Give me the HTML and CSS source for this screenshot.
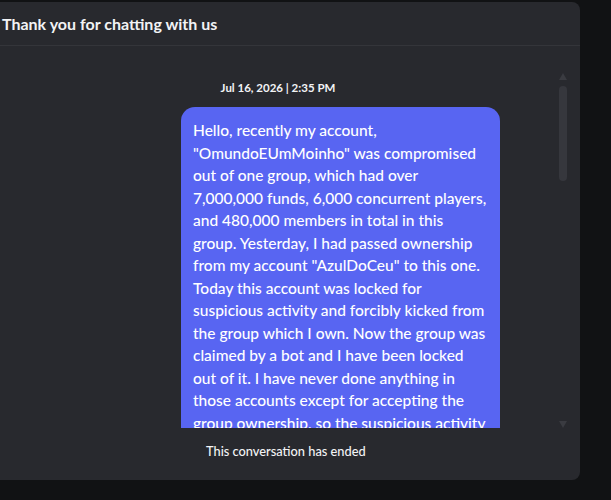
FILE: index.html
```html
<!DOCTYPE html>
<html lang="en">
<head>
<meta charset="utf-8">
<title>Chat ended</title>
<link rel="stylesheet" href="styles.css">
</head>
<body>
<div class="panel">
  <header class="panel-header">
    <h1 class="title">Thank you for chatting with us</h1>
  </header>
  <div class="chat">
    <div class="messages">
      <div class="timestamp">Jul 16, 2026 | 2:35 PM</div>
      <div class="bubble">Hello, recently my account,<br>"OmundoEUmMoinho" was compromised<br>out of one group, which had over<br>7,000,000 funds, 6,000 concurrent players,<br>and 480,000 members in total in this<br>group. Yesterday, I had passed ownership<br>from my account "AzulDoCeu" to this one.<br>Today this account was locked for<br>suspicious activity and forcibly kicked from<br>the group which I own. Now the group was<br>claimed by a bot and I have been locked<br>out of it. I have never done anything in<br>those accounts except for accepting the<br>group ownership, so the suspicious activity</div>
    </div>
    <div class="scrollbar">
      <span class="arrow arrow-up"></span>
      <div class="track"><div class="thumb"></div></div>
      <span class="arrow arrow-down"></span>
    </div>
  </div>
  <footer class="panel-footer">This conversation has ended</footer>
</div>
</body>
</html>
```
FILE: styles.css
```css
html, body {
  margin: 0;
  padding: 0;
  background: #111214;
  height: 100%;
  overflow: hidden;
}
body {
  font-family: Lato, "Liberation Sans", sans-serif;
  color: #f2f3f5;
}
.panel {
  margin-top: 2px;
  margin-left: -20px;
  width: 600px;
  height: 478px;
  background: #28292e;
  border-radius: 8px;
  display: flex;
  flex-direction: column;
  overflow: hidden;
}
.panel-header {
  height: 43px;
  border-bottom: 1px solid #34353a;
  display: flex;
  align-items: center;
  padding-left: 22px;
  flex: none;
}
.title {
  margin: 0;
  font-size: 16px;
  font-weight: 700;
  color: #f2f3f5;
}
.chat {
  height: 382px;
  display: flex;
  flex: none;
}
.messages {
  margin-left: 20px;
  width: 556px;
  overflow: hidden;
  display: flex;
  flex-direction: column;
  align-items: center;
}
.timestamp {
  margin-top: 34px;
  font-size: 11.5px;
  font-weight: 700;
  line-height: 16px;
  color: #f2f3f5;
}
.bubble {
  align-self: flex-end;
  margin-right: 56px;
  margin-top: 11px;
  width: 319px;
  box-sizing: border-box;
  padding: 12px;
  background: #5865f2;
  border-radius: 14px;
  font-size: 15.5px;
  font-weight: 500;
  line-height: 22.5px;
  color: #fff;
  white-space: nowrap;
  flex: none;
}
.scrollbar {
  margin-left: 2px;
  width: 9px;
  display: flex;
  flex-direction: column;
  align-items: center;
  padding-top: 27px;
}
.arrow {
  width: 0;
  height: 0;
  border-left: 4.5px solid transparent;
  border-right: 4.5px solid transparent;
}
.arrow-up {
  border-bottom: 7px solid #3a3b41;
}
.arrow-down {
  border-top: 7px solid #3a3b41;
}
.track {
  width: 9px;
  height: 330px;
  margin: 6px 0 6px;
}
.thumb {
  width: 8px;
  margin: 0 auto;
  height: 95px;
  border-radius: 4px;
  background: #36373d;
}
.panel-footer {
  height: 46px;
  padding-bottom: 6px;
  display: flex;
  align-items: center;
  padding-left: 226px;
  font-size: 12.8px;
  font-weight: 500;
  color: #f2f3f5;
}
```
